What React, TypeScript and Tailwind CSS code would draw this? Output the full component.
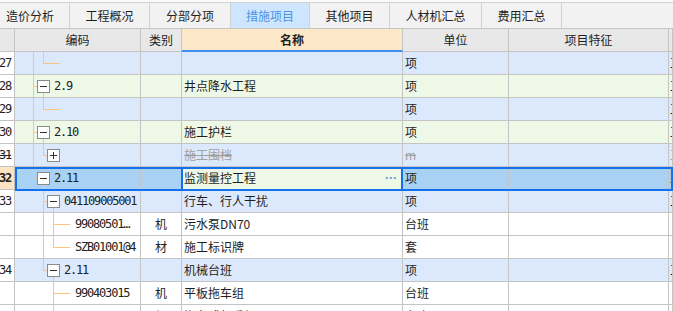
import React from 'react';

type Line = [number, 'full' | 'top'];
type Tree = { lines: Line[]; conn: number; box?: '-' | '+'; child?: boolean; code?: string };
type Row = {
  n?: string;
  bg: 'b' | 'g' | 'w' | 'sel';
  tree: Tree;
  cat?: string;
  name?: string;
  unit?: string;
  struck?: boolean;
};

const tabs = ['造价分析', '工程概况', '分部分项', '措施项目', '其他项目', '人材机汇总', '费用汇总'];
const tabW = ['w-[70px] justify-start pl-[6px]', 'w-[80px]', 'w-[81px]', 'w-[79px]', 'w-[80px]', 'w-[92px]', 'w-[80px]'];

const rows: Row[] = [
  { n: '27', bg: 'b', tree: { lines: [[18, 'full'], [28, 'top']], conn: 28 }, unit: '项' },
  { n: '28', bg: 'g', tree: { lines: [[18, 'full']], conn: 18, box: '-', child: true, code: '2.9' }, name: '井点降水工程', unit: '项' },
  { n: '29', bg: 'b', tree: { lines: [[18, 'full'], [28, 'top']], conn: 28 }, unit: '项' },
  { n: '30', bg: 'g', tree: { lines: [[18, 'full']], conn: 18, box: '-', child: true, code: '2.10' }, name: '施工护栏', unit: '项' },
  { n: '31', bg: 'b', struck: true, tree: { lines: [[18, 'full'], [28, 'top']], conn: 28, box: '+' }, name: '施工围档', unit: 'm' },
  { n: '32', bg: 'sel', tree: { lines: [[18, 'top']], conn: 18, box: '-', child: true, code: '2.11' }, name: '监测量控工程', unit: '项' },
  { n: '33', bg: 'b', tree: { lines: [[28, 'full']], conn: 28, box: '-', child: true, code: '041109005001' }, name: '行车、行人干扰', unit: '项' },
  { bg: 'w', tree: { lines: [[28, 'full'], [38, 'full']], conn: 38, code: '99080501…' }, cat: '机', name: '污水泵DN70', unit: '台班' },
  { bg: 'w', tree: { lines: [[28, 'full'], [38, 'top']], conn: 38, code: 'SZB01001@4' }, cat: '材', name: '施工标识牌', unit: '套' },
  { n: '34', bg: 'b', tree: { lines: [[28, 'top']], conn: 28, box: '-', child: true, code: '2.11' }, name: '机械台班', unit: '项' },
  { bg: 'w', tree: { lines: [[38, 'full']], conn: 38, code: '990403015' }, cat: '机', name: '平板拖车组', unit: '台班' },
  { bg: 'w', tree: { lines: [[38, 'full']], conn: 38, code: '990304004' }, cat: '机', name: '汽车式起重机', unit: '台班' },
];

const grid = 'grid grid-cols-[15px_126px_41px_221px_106px_160px_1fr]';
const cell = 'h-[23px] border-r border-b border-[#c4c4c4] overflow-hidden whitespace-nowrap flex items-center';
const cjk = "font-['Noto_Sans_CJK_SC',sans-serif] text-[12px] text-[#1e1e1e]";
const mono = "font-['DejaVu_Sans_Mono',monospace] text-[12px] tracking-[-1.2px] text-[#222]";
const orange = '#fcc47e';

const bgOf = (b: Row['bg']) =>
  b === 'b' ? 'bg-[#dce9fd]' : b === 'g' ? 'bg-[#eef8e7]' : b === 'sel' ? 'bg-[#a9d1f3]' : 'bg-white';

const TreeLines = ({ t }: { t: Tree }) => {
  const c = t.conn;
  return (
    <svg className="absolute left-0 top-0" width={126} height={22}>
      {t.lines.map(([x, k], i) => (
        <line key={i} x1={x + 0.5} x2={x + 0.5} y1={0} y2={k === 'full' ? 22 : 11.5} stroke={orange} />
      ))}
      <line x1={c} x2={t.box ? c + 4 : c + 17} y1={11.5} y2={11.5} stroke={orange} />
      {t.child && <line x1={c + 10.5} x2={c + 10.5} y1={17.5} y2={22} stroke={orange} />}
      {t.box && (
        <g>
          <rect x={c + 4.5} y={5.5} width={12} height={12} fill="white" stroke="#8a8a8a" />
          <line x1={c + 7} x2={c + 14} y1={11.5} y2={11.5} stroke="#333" />
          {t.box === '+' && <line x1={c + 10.5} x2={c + 10.5} y1={8} y2={15} stroke="#333" />}
        </g>
      )}
    </svg>
  );
};

const GridRow = ({ r }: { r: Row }) => {
  const bg = bgOf(r.bg);
  const sel = r.bg === 'sel';
  const textX = r.tree.box ? r.tree.conn + 21 : r.tree.conn + 22;
  return (
    <div className={`${grid} relative`}>
      <div
        className={`${cell} justify-end pr-[3px] ${mono} ${sel ? 'bg-[#fde3c2] font-bold' : 'bg-white'} ${r.struck ? 'line-through' : ''}`}
      >
        {r.n}
      </div>
      <div className={`${cell} relative ${bg}`}>
        <TreeLines t={r.tree} />
        {r.tree.code && (
          <span className={`relative ${mono}`} style={{ paddingLeft: textX }}>
            {r.tree.code}
          </span>
        )}
      </div>
      <div className={`${cell} justify-center ${bg} ${cjk}`}>{r.cat}</div>
      <div className={`${cell} pl-[2px] ${sel ? 'bg-[#eef8e7]' : bg} ${cjk} ${r.struck ? 'line-through text-[#a0a0a0]' : ''}`}>
        <span className="flex-1">{r.name}</span>
        {sel && (
          <span className="pr-[5px] font-['Liberation_Sans',sans-serif] text-[#5a9bd8] font-bold text-[12px] leading-none">···</span>
        )}
      </div>
      <div className={`${cell} pl-[2px] ${bg} ${cjk} ${r.struck ? 'text-[9px] text-[#a0a0a0] line-through' : ''}`}>{r.unit}</div>
      <div className={`${cell} ${bg}`}></div>
      <div className={`${cell} pl-[1px] ${bg} ${cjk} ${r.struck ? 'text-[#a0a0a0]' : ''}`}>{r.bg !== 'w' ? '工' : ''}</div>
      {sel && (
        <>
          <div className="absolute left-[15px] right-0 top-0 h-[24px] border-2 border-[#1570ec] z-10 pointer-events-none" />
          <div className="absolute left-[181px] w-[222px] top-0 h-[24px] border-x-2 border-[#1570ec] z-10 pointer-events-none" />
        </>
      )}
    </div>
  );
};

const App: React.FC = () => {
  return (
    <div className="w-[673px] h-[311px] overflow-hidden bg-white">
      <div className="h-[29px] pt-[2px] flex bg-[#fafafa] border-b border-[#c6c6c6]">
        {tabs.map((t, i) => (
          <div
            key={t}
            className={`${tabW[i]} h-full flex items-center justify-center border-r border-t border-[#d2d2d2] ${cjk} ${
              i === 3 ? 'bg-[#cde5fd] !text-[#4b94e6]' : 'bg-[#f2f2f2]'
            }`}
          >
            {t}
          </div>
        ))}
        <div className="flex-1 h-full bg-[#f2f2f2] border-t border-[#d2d2d2]" />
      </div>

      <div className={`${grid} bg-[#e8e8e8]`}>
        <div className={cell}></div>
        <div className={`${cell} justify-center ${cjk}`}>编码</div>
        <div className={`${cell} justify-center ${cjk}`}>类别</div>
        <div className={`${cell} justify-center bg-[#fde7c9] !border-b-2 !border-b-[#3d8ff0] ${cjk} font-bold`}>名称</div>
        <div className={`${cell} justify-center ${cjk}`}>单位</div>
        <div className={`${cell} justify-center ${cjk}`}>项目特征</div>
        <div className={cell}></div>
      </div>

      {rows.map((r, i) => (
        <GridRow key={i} r={r} />
      ))}
    </div>
  );
};

export default App;
